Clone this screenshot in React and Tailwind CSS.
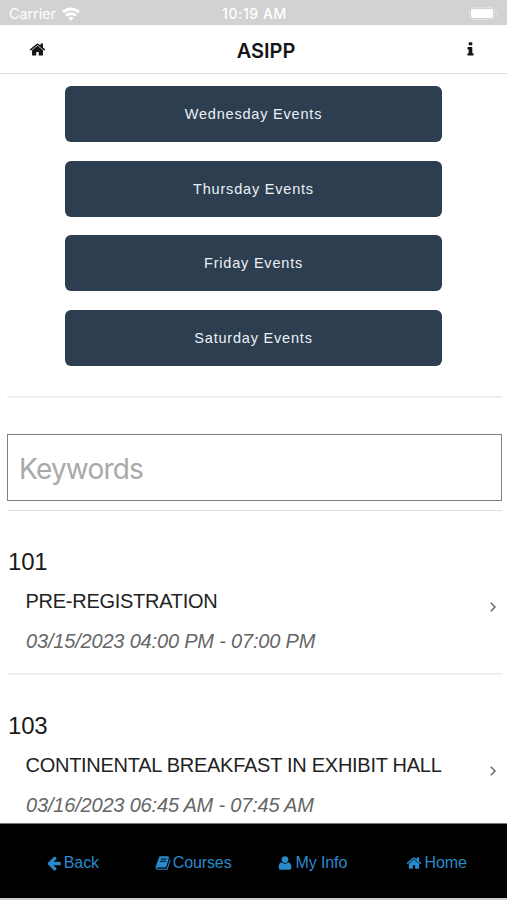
import clsx from 'clsx';

const ICON_PATHS = {
  home: 'M1472 992v480q0 26-19 45t-45 19h-384v-384h-256v384h-384q-26 0-45-19t-19-45v-480q0-1 .5-3t.5-3l575-474 575 474q1 2 1 6zm223-69l-62 74q-8 9-21 11h-3q-13 0-21-7l-692-577-692 577q-12 8-24 7-13-2-21-11l-62-74q-8-10-7-23.5t11-21.5l719-599q32-26 76-26t76 26l244 204v-195q0-14 9-23t23-9h192q14 0 23 9t9 23v408l219 182q10 8 11 21.5t-7 23.5z',
  back: 'M1664 896v128q0 53-32.5 90.5t-84.5 37.5h-704l293 294q38 36 38 90t-38 90l-75 76q-37 37-90 37-52 0-91-37l-651-652q-37-37-37-90 0-52 37-91l651-650q38-38 91-38 52 0 90 38l75 74q38 38 38 91t-38 91l-293 293h704q52 0 84.5 37.5t32.5 90.5z',
  user: 'M1600 1405q0 120-73 189.5t-194 69.5h-874q-121 0-194-69.5t-73-189.5q0-53 3.500-103.500t14-109 26.500-108.500 43-97.500 62-81 85.500-53.500 111.500-20q9 0 42 21.500t74.500 48 108 48 133.500 21.500 133.500-21.500 108-48 74.500-48 42-21.500q61 0 111.500 20t85.500 53.500 62 81 43 97.500 26.500 108.500 14 109 3.500 103.500zm-320-893q0 159-112.500 271.500t-271.500 112.500-271.500-112.500-112.500-271.500 112.500-271.500 271.500-112.500 271.500 112.500 112.500 271.500z',
  info: 'M1216 1344v128q0 26-19 45t-45 19h-512q-26 0-45-19t-19-45v-128q0-26 19-45t45-19h64v-384h-64q-26 0-45-19t-19-45v-128q0-26 19-45t45-19h384q26 0 45 19t19 45v576h64q26 0 45 19t19 45zm-128-1152v192q0 26-19 45t-45 19h-256q-26 0-45-19t-19-45v-192q0-26 19-45t45-19h256q26 0 45 19t19 45z',
  book: 'M1703 478q40 57 18 129l-275 906q-19 64-76.5 107.5t-122.5 43.5h-923q-77 0-148.5-53.5t-99.5-131.5q-24-67-2-127 0-4 3-27t4-37q1-8-3-21.5t-3-19.5q2-11 8-21t16.5-23.5 16.5-23.5q23-38 45-91.5t30-91.5q3-10 .5-30t-.5-28q3-11 17-28t17-23q21-36 42-92t25-90q1-9-2.5-32t.5-28q4-13 22-30.5t22-22.5q19-26 42.5-84.5t27.5-96.5q1-8-3-25.5t-2-26.5q2-8 9-18t18-23 17-21q8-12 16.5-30.5t15-35 16-36 19.5-32 26.5-23.5 36-11.5 47.5 5.5l-1 3q38-9 51-9h761q74 0 114 56t18 130l-274 906q-36 119-71.5 153.5t-128.5 34.5h-869q-27 0-38 15-11 16-1 43 24 70 144 70h923q29 0 56-15.5t35-41.5l300-987q7-22 5-57 38 15 59 43zm-1064 2q-4 13 2 22.5t20 9.5h608q13 0 25.5-9.5t16.5-22.5l21-64q4-13-2-22.5t-20-9.5h-608q-13 0-25.5 9.5t-16.5 22.5zm-83 256q-4 13 2 22.5t20 9.5h608q13 0 25.5-9.5t16.5-22.5l21-64q4-13-2-22.5t-20-9.5h-608q-13 0-25.5 9.5t-16.5 22.5z',
};

const DAYS = ['Wednesday', 'Thursday', 'Friday', 'Saturday'];

const EVENTS = [
  { id: '101', title: 'PRE-REGISTRATION', time: '03/15/2023 04:00 PM - 07:00 PM' },
  {
    id: '103',
    title: 'CONTINENTAL BREAKFAST IN EXHIBIT HALL',
    time: '03/16/2023 06:45 AM - 07:45 AM',
  },
];

const TABS = [
  { icon: 'back', label: 'Back', spacing: 'gap-[2px]' },
  { icon: 'book', label: 'Courses', spacing: 'gap-[2px]' },
  { icon: 'user', label: 'My Info', spacing: 'gap-[2px] pr-[3px]' },
  { icon: 'home', label: 'Home', spacing: 'gap-[2px] pl-[4px]' },
];

function Icon({ name, className }) {
  return (
    <svg viewBox="0 0 1792 1792" fill="currentColor" className={clsx('shrink-0', className)}>
      <path d={ICON_PATHS[name]} />
    </svg>
  );
}

function StatusBar() {
  return (
    <div className="grid h-[25px] shrink-0 grid-cols-3 items-center bg-[#d2d2d2] px-[9px] pt-[2px] font-['Inter',sans-serif] text-[14.5px] text-white">
      <div className="flex items-center gap-[6px]">
        <span className="tracking-[-0.1px]">Carrier</span>
        <svg viewBox="0 0 18 14" className="h-[14px] w-[18px]" fill="none" stroke="currentColor" strokeWidth="2.8">
          <path d="M1 5.2a11.6 11.6 0 0 1 16 0" />
          <path d="M4 8.6a7.2 7.2 0 0 1 10 0" />
          <path d="M9 13.8l-2.6-2.7a3.7 3.7 0 0 1 5.2 0z" fill="currentColor" stroke="none" />
        </svg>
      </div>
      <span className="pl-[2px] text-center text-[14px] font-medium tracking-[0.6px]">10:19 AM</span>
      <div className="flex items-center justify-end gap-px pr-[1px]">
        <div className="rounded-[4px] border border-[#e0e0e0] p-[1px]">
          <div className="h-[9px] w-[22px] rounded-[2px] bg-white" />
        </div>
        <div className="h-[4px] w-[1.5px] rounded-r bg-[#e0e0e0]" />
      </div>
    </div>
  );
}

function Header() {
  return (
    <header className="grid h-[49px] shrink-0 grid-cols-[17px_1fr_17px] items-center border-b border-[#dedede] px-[29px] text-[#151515]">
      <Icon name="home" className="h-[17px] w-[17px]" />
      <h1 className="pt-[3px] pl-[25px] text-center font-['Inter',sans-serif] text-[20px] font-semibold">ASIPP</h1>
      <Icon name="info" className="ml-px h-[17px] w-[17px]" />
    </header>
  );
}

function EventRow({ event }) {
  return (
    <li className="flex h-[164px] items-center justify-between border-b-2 border-[#f0f0f0] pr-[6px]">
      <div className="pt-[20px] pl-px">
        <h2 className="text-[24px] leading-[40px] tracking-[-0.2px] text-[#1a1a1a]">{event.id}</h2>
        <p className="pl-[17.5px] text-[20px] leading-[39px] tracking-[-0.27px] text-[#222]">{event.title}</p>
        <p className="pl-[18px] text-[20px] leading-[41px] tracking-[-0.18px] text-[#666] italic">{event.time}</p>
      </div>
      <svg viewBox="0 0 6 10" className="mt-[31px] h-[10px] w-[6px]" fill="none" stroke="#666" strokeWidth="1.5">
        <path d="M0.8 0.8L5 5L0.8 9.2" />
      </svg>
    </li>
  );
}

export default function App() {
  return (
    <div className="flex h-[900px] w-[507px] flex-col overflow-hidden bg-white font-['Liberation_Sans',Arial,sans-serif]">
      <StatusBar />
      <Header />

      <main className="min-h-0 flex-1 overflow-hidden pt-[12px] pr-[5px] pl-[7px]">
        <div className="flex flex-col gap-[18.6px] pr-[60px] pl-[58px]">
          {DAYS.map((day) => (
            <button
              key={day}
              className="h-[56px] w-full rounded-[6px] bg-[#2c3e50] pt-[2px] text-[14.5px] tracking-[0.8px] text-[#ecf0f5]"
            >
              {day} Events
            </button>
          ))}
        </div>
        <hr className="mt-[30px] border-t-2 border-[#eee]" />
        <input
          type="text"
          placeholder="Keywords"
          className="mt-[36px] block h-[67px] w-full border-[1.5px] border-[#808080] px-[11px] pt-[4px] font-['Inter',sans-serif] text-[28px] tracking-[-0.8px] text-[#222] placeholder:text-[#a9a9a9]"
        />
        <ul className="mt-[9px] border-t border-[#e2e2e2]">
          {EVENTS.map((event) => (
            <EventRow key={event.id} event={event} />
          ))}
        </ul>
      </main>

      <footer className="shrink-0 border-t border-b-2 border-t-[#777] border-b-[#d0d0d0] bg-black">
        <nav className="grid h-[74px] grid-cols-4 px-[12px] pt-[3px] text-[#2a8acb]">
          {TABS.map((tab) => (
            <a
              key={tab.label}
              href="#"
              className={clsx('flex items-center justify-center text-[16px] tracking-[-0.1px]', tab.spacing)}
            >
              <Icon name={tab.icon} className="h-4 w-4" />
              {tab.label}
            </a>
          ))}
        </nav>
      </footer>
    </div>
  );
}
